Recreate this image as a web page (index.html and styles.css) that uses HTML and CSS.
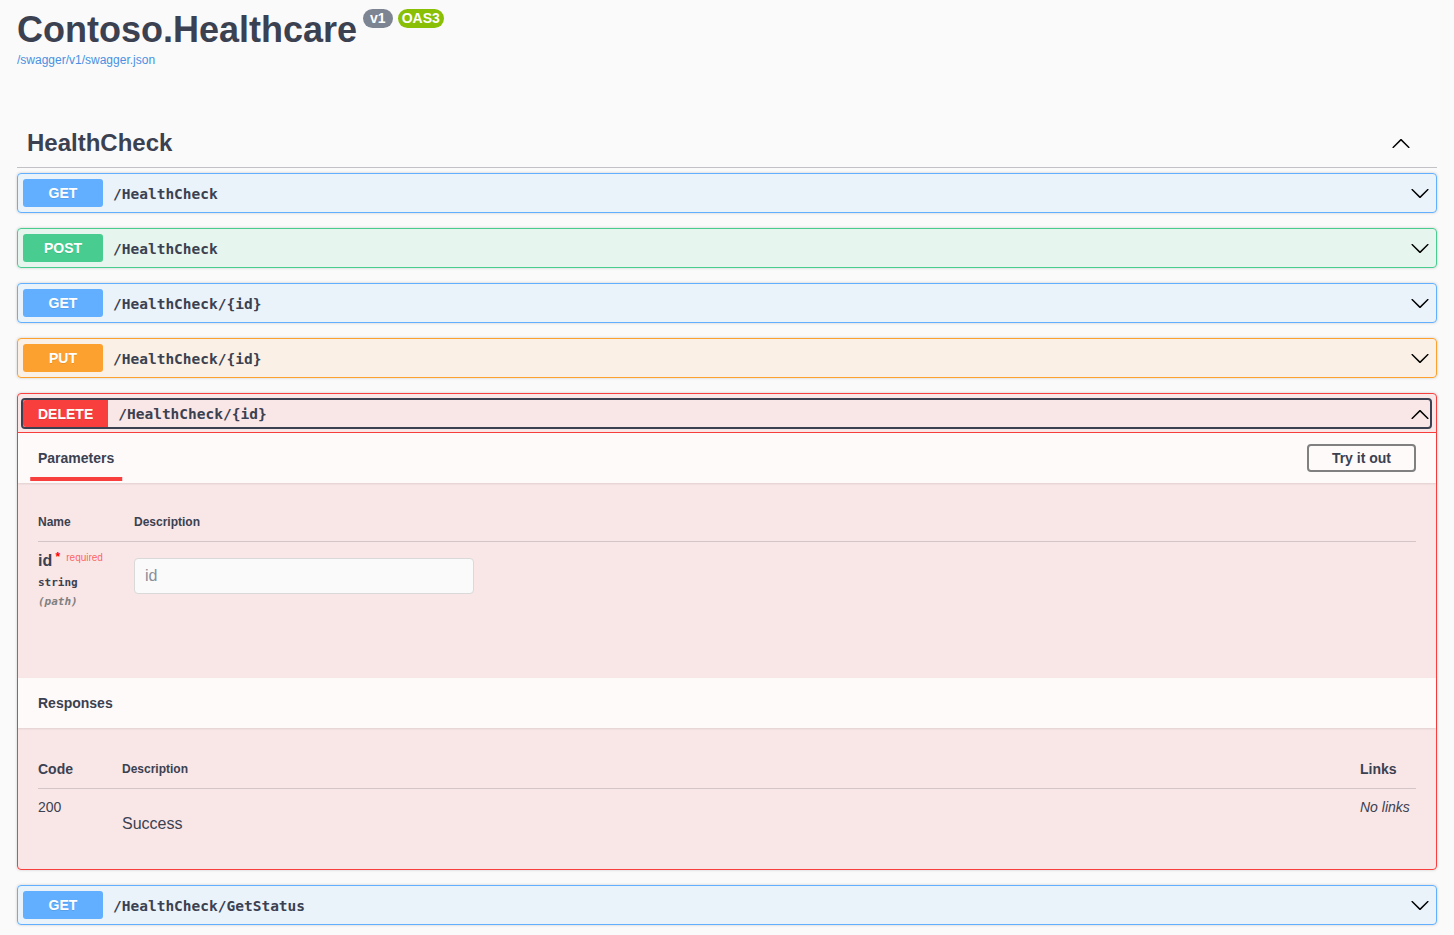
FILE: index.html
```html
<!DOCTYPE html>
<html>
<head>
<meta charset="utf-8">
<link rel="stylesheet" href="styles.css">
</head>
<body>
<div class="wrapper">
  <div class="info">
    <h2 class="title">Contoso.Healthcare<span class="badge grey">v1</span><span class="badge green">OAS3</span></h2>
    <a class="link" href="#">/swagger/v1/swagger.json</a>
  </div>

  <div class="tag-section">
    <div class="tag">
      <h3>HealthCheck</h3>
      <svg class="arrow" width="20" height="20" viewBox="0 0 20 20"><path d="M17.418 14.908c.272.268.709.268.979 0s.271-.701 0-.969l-7.908-7.83c-.27-.268-.707-.268-.979 0l-7.908 7.83c-.27.268-.27.701 0 .969.271.268.709.268.979 0L10 7.767l7.418 7.141z"/></svg>
    </div>

    <div class="ops">
      <div class="opblock get">
        <div class="summary">
          <span class="method">GET</span>
          <span class="path">/HealthCheck</span>
          <svg class="arrow" width="20" height="20" viewBox="0 0 20 20"><path d="M17.418 6.109c.272-.268.709-.268.979 0s.271.701 0 .969l-7.908 7.83c-.27.268-.707.268-.979 0l-7.908-7.83c-.27-.268-.27-.701 0-.969.271-.268.709-.268.979 0L10 13.25l7.418-7.141z"/></svg>
        </div>
      </div>
      <div class="opblock post">
        <div class="summary">
          <span class="method">POST</span>
          <span class="path">/HealthCheck</span>
          <svg class="arrow" width="20" height="20" viewBox="0 0 20 20"><path d="M17.418 6.109c.272-.268.709-.268.979 0s.271.701 0 .969l-7.908 7.83c-.27.268-.707.268-.979 0l-7.908-7.83c-.27-.268-.27-.701 0-.969.271-.268.709-.268.979 0L10 13.25l7.418-7.141z"/></svg>
        </div>
      </div>
      <div class="opblock get">
        <div class="summary">
          <span class="method">GET</span>
          <span class="path">/HealthCheck/{id}</span>
          <svg class="arrow" width="20" height="20" viewBox="0 0 20 20"><path d="M17.418 6.109c.272-.268.709-.268.979 0s.271.701 0 .969l-7.908 7.83c-.27.268-.707.268-.979 0l-7.908-7.83c-.27-.268-.27-.701 0-.969.271-.268.709-.268.979 0L10 13.25l7.418-7.141z"/></svg>
        </div>
      </div>
      <div class="opblock put">
        <div class="summary">
          <span class="method">PUT</span>
          <span class="path">/HealthCheck/{id}</span>
          <svg class="arrow" width="20" height="20" viewBox="0 0 20 20"><path d="M17.418 6.109c.272-.268.709-.268.979 0s.271.701 0 .969l-7.908 7.83c-.27.268-.707.268-.979 0l-7.908-7.83c-.27-.268-.27-.701 0-.969.271-.268.709-.268.979 0L10 13.25l7.418-7.141z"/></svg>
        </div>
      </div>

      <div class="opblock delete open">
        <div class="summary focused">
          <div class="control">
            <span class="method">DELETE</span>
            <span class="path">/HealthCheck/{id}</span>
            <svg class="arrow" width="20" height="20" viewBox="0 0 20 20"><path d="M17.418 14.908c.272.268.709.268.979 0s.271-.701 0-.969l-7.908-7.83c-.27-.268-.707-.268-.979 0l-7.908 7.83c-.27.268-.27.701 0 .969.271.268.709.268.979 0L10 7.767l7.418 7.141z"/></svg>
          </div>
        </div>
        <div class="body">
          <div class="section-header">
            <div class="tab-item"><h4><span>Parameters</span></h4></div>
            <button class="try-out">Try it out</button>
          </div>
          <div class="params">
            <div class="ptable">
              <div class="phead">
                <div class="col-name">Name</div>
                <div class="col-desc">Description</div>
              </div>
              <div class="prow">
                <div class="col-name">
                  <div class="pname">id<span class="star">&nbsp;*</span><span class="required">required</span></div>
                  <div class="ptype">string</div>
                  <div class="pin">(path)</div>
                </div>
                <div class="col-desc">
                  <input class="pinput" type="text" placeholder="id">
                </div>
              </div>
            </div>
          </div>
          <div class="section-header resp-header">
            <h4>Responses</h4>
          </div>
          <div class="responses">
            <div class="rhead">
              <div class="rcode">Code</div>
              <div class="rdesc">Description</div>
              <div class="rlinks">Links</div>
            </div>
            <div class="rrow">
              <div class="rcode val">200</div>
              <div class="rdesc val"><p>Success</p></div>
              <div class="rlinks val"><i>No links</i></div>
            </div>
          </div>
        </div>
      </div>

      <div class="opblock get">
        <div class="summary">
          <span class="method">GET</span>
          <span class="path">/HealthCheck/GetStatus</span>
          <svg class="arrow" width="20" height="20" viewBox="0 0 20 20"><path d="M17.418 6.109c.272-.268.709-.268.979 0s.271.701 0 .969l-7.908 7.83c-.27.268-.707.268-.979 0l-7.908-7.83c-.27-.268-.27-.701 0-.969.271-.268.709-.268.979 0L10 13.25l7.418-7.141z"/></svg>
        </div>
      </div>
    </div>
  </div>
</div>
</body>
</html>
```

FILE: styles.css
```css
html, body {
  margin: 0;
  padding: 0;
  background: #fafafa;
}
body {
  font-family: "Liberation Sans", Arial, sans-serif;
  color: #3b4151;
}
.wrapper {
  padding: 0 17px;
}
.info {
  padding-top: 9px;
}
.title {
  margin: 0;
  font-size: 36px;
  font-weight: 700;
  line-height: 41px;
  color: #3b4151;
}
.badge {
  display: inline-block;
  position: relative;
  top: -19px;
  vertical-align: baseline;
  font-size: 14px;
  line-height: 15px;
  font-weight: 700;
  color: #fff;
  padding: 2px 4px;
  border-radius: 57px;
  margin-left: 5px;
}
.badge.grey { background: #7d8492; margin-left: 6px; padding: 2px 7px; }
.badge.green { background: #89bf04; }
.link {
  display: inline-block;
  font-size: 12px;
  line-height: 15px;
  margin-top: 3px;
  color: #4990e2;
  text-decoration: none;
}
.tag-section {
  margin-top: 51px;
}
.tag {
  display: flex;
  align-items: center;
  justify-content: space-between;
  padding: 10px 26px 10px 10px;
  border-bottom: 1px solid rgba(59, 65, 81, .3);
}
.tag h3 {
  margin: 0;
  font-size: 24px;
  line-height: 28px;
  font-weight: 700;
}
.arrow {
  fill: #000;
  flex: none;
}
.ops {
  padding-top: 5px;
}
.opblock {
  border: 1px solid #000;
  border-radius: 4px;
  margin-bottom: 15px;
  box-shadow: 0 0 3px rgba(0, 0, 0, .19);
}
.summary {
  display: flex;
  align-items: center;
  padding: 5px;
}
.method {
  display: inline-block;
  min-width: 80px;
  box-sizing: border-box;
  padding: 6px 15px;
  font-size: 14px;
  line-height: 16px;
  font-weight: 700;
  color: #fff;
  text-align: center;
  border-radius: 3px;
  text-shadow: 0 1px 0 rgba(0, 0, 0, .1);
}
.path {
  flex: 1;
  padding: 2px 10px 0;
  font-family: "DejaVu Sans Mono", monospace;
  font-weight: 700;
  font-size: 14.5px;
  color: #3b4151;
}
.summary > .arrow { margin-right: 1px; }

.get { background: rgba(97, 175, 254, .1); border-color: #61affe; }
.get .method { background: #61affe; }
.post { background: rgba(73, 204, 144, .1); border-color: #49cc90; }
.post .method { background: #49cc90; }
.put { background: rgba(252, 161, 48, .1); border-color: #fca130; }
.put .method { background: #fca130; }
.delete { background: rgba(249, 62, 62, .1); border-color: #f93e3e; }
.delete .method { background: #f93e3e; }

.summary.focused {
  padding: 4px 4px 3px 3px;
  border-bottom: 1px solid #f93e3e;
}
.control {
  flex: 1;
  display: flex;
  align-items: center;
  border: 2px solid #3b4151;
  border-radius: 4px;
}
.control .method {
  padding: 6px 15px 5px;
  border-radius: 3px 0 0 3px;
}
.control .path { padding-top: 1px; }
.control .arrow { margin-right: 0; }

.section-header {
  display: flex;
  align-items: center;
  justify-content: space-between;
  height: 50px;
  box-sizing: border-box;
  padding: 0 20px;
  background: rgba(255, 255, 255, .8);
  box-shadow: 0 1px 2px rgba(0, 0, 0, .1);
}
.section-header h4 {
  margin: 0;
  font-size: 14px;
  line-height: 17px;
  font-weight: 700;
}
.tab-item h4 span {
  position: relative;
}
.tab-item h4 span::after {
  content: "";
  position: absolute;
  left: 50%;
  bottom: -15px;
  width: 120%;
  height: 4px;
  background: #f93e3e;
  transform: translateX(-50%);
}
.try-out {
  font-family: "Liberation Sans", Arial, sans-serif;
  font-size: 14px;
  font-weight: 700;
  color: #3b4151;
  background: transparent;
  border: 2px solid #808080;
  border-radius: 4px;
  padding: 4px 23px;
  line-height: 16px;
  margin-right: 0;
}
.params {
  padding: 21px 20px 0;
  height: 195px;
  box-sizing: border-box;
}
.phead {
  display: flex;
  font-size: 12px;
  font-weight: 700;
  line-height: 15px;
  padding: 11px 0 11px;
  border-bottom: 1px solid rgba(59, 65, 81, .2);
}
.col-name { width: 96px; flex: none; }
.col-desc { flex: 1; }
.prow {
  display: flex;
  padding-top: 10px;
}
.pname {
  font-size: 16px;
  font-weight: 700;
  line-height: 18px;
}
.star {
  color: red;
  font-size: 12px;
  position: relative;
  top: -5px;
}
.required {
  font-size: 10px;
  font-weight: 400;
  color: rgba(255, 0, 0, .6);
  position: relative;
  top: -5px;
  margin-left: 6px;
}
.ptype {
  font-family: "DejaVu Sans Mono", monospace;
  font-size: 11px;
  font-weight: 700;
  margin-top: 4px;
  line-height: 14px;
}
.pin {
  font-family: "DejaVu Sans Mono", monospace;
  font-size: 11px;
  font-weight: 700;
  font-style: italic;
  color: #808080;
  margin-top: 5px;
  line-height: 14px;
}
.pinput {
  display: block;
  width: 340px;
  height: 36px;
  box-sizing: border-box;
  margin-top: 6px;
  padding: 8px 10px;
  border: 1px solid #d9d9d9;
  border-radius: 4px;
  background: #fafafa;
  font-family: "Liberation Sans", Arial, sans-serif;
  font-size: 16px;
  color: #3b4151;
}
.pinput::placeholder { color: #8a8f99; }

.responses {
  padding: 21px 20px 0;
  height: 141px;
  box-sizing: border-box;
}
.rhead, .rrow {
  display: flex;
}
.rhead {
  align-items: center;
  height: 40px;
  border-bottom: 1px solid rgba(59, 65, 81, .2);
  box-sizing: border-box;
}
.rcode { width: 84px; flex: none; }
.rdesc { flex: 1; }
.rlinks { width: 56px; flex: none; }
.rhead .rcode, .rhead .rlinks {
  font-size: 14px;
  font-weight: 700;
}
.rhead .rdesc {
  font-size: 12px;
  font-weight: 700;
}
.rrow {
  padding-top: 10px;
  font-size: 14px;
  line-height: 17px;
}
.rdesc p {
  margin: 16px 0 0;
  font-size: 16px;
  line-height: 18px;
}
.rlinks i { font-style: italic; }
```
